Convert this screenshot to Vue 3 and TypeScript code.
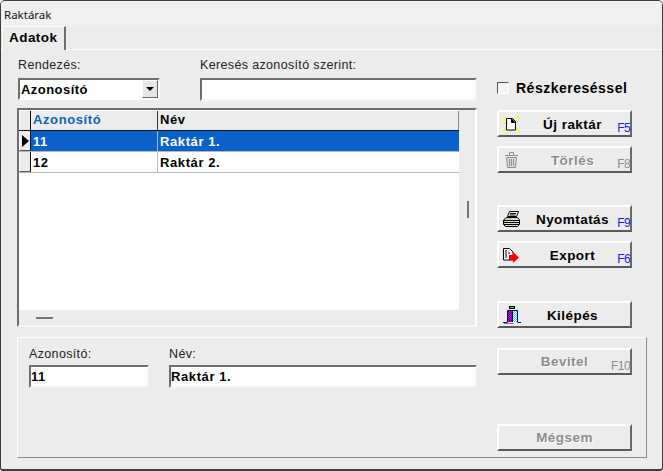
<script setup lang="ts">
interface Row { id: string; name: string; active?: boolean }
const rows: Row[] = [
  { id: '11', name: 'Raktár 1.', active: true },
  { id: '12', name: 'Raktár 2.' },
]
</script>

<template>
  <div class="win">
    <div class="title">Raktárak</div>
    <div class="tabs"><div class="tab">Adatok</div></div>
    <div class="page">
      <div class="top">
        <div class="left">
          <div class="filters">
            <div class="field combo-field">
              <label>Rendezés:</label>
              <div class="combo">
                <span>Azonosító</span>
                <span class="arrow"><i></i></span>
              </div>
            </div>
            <div class="field search-field">
              <label>Keresés azonosító szerint:</label>
              <div class="input"></div>
            </div>
          </div>
          <div class="grid">
            <div class="head">
              <div class="ind"></div>
              <div class="c1 blue">Azonosító</div>
              <div class="c2">Név</div>
            </div>
            <div v-for="r in rows" :key="r.id" class="row" :class="{ active: r.active }">
              <div class="ind"><i v-if="r.active"></i></div>
              <div class="c1">{{ r.id }}</div>
              <div class="c2">{{ r.name }}</div>
            </div>
            <div class="fill"></div>
            <div class="vthumb"></div>
            <div class="hbar"><div class="hthumb"></div></div>
          </div>
        </div>
        <div class="right">
          <div class="check"><span class="box"></span><span>Részkereséssel</span></div>
          <button class="btn b-new">
            <svg class="ico" viewBox="0 0 17 17" width="17" height="17">
              <g stroke="#ffff00" stroke-width="1.4" fill="none"><path d="M0 1l4 4M16.500 0l-4 4.500M.5 16l3-3M16 16l-3-3M0 8.500h3M8 15.500v1.500"/></g>
              <path d="M3.500 3.500h6l3 3v8.500h-9z" fill="#fff" stroke="#000"/>
              <path d="M8.500 3.500v4h4" fill="#000" stroke="#000"/>
            </svg>
            <span class="lbl">Új raktár</span><span class="key">F5</span>
          </button>
          <button class="btn off b-del">
            <svg class="ico i-del" viewBox="0 0 13 16" width="13" height="16" fill="none" stroke="#8c8c8c">
              <path d="M0 3.500h13M4.500 3v-2.500h4v2.500"/>
              <path d="M1.500 5.500h10l-1 10h-8z" fill="#dcdcdc"/>
              <path d="M4.500 7v7M6.500 7v7M8.500 7v7"/>
            </svg>
            <span class="lbl">Törlés</span><span class="key">F8</span>
          </button>
          <button class="btn b-print">
            <svg class="ico" viewBox="0 0 17 16" width="17" height="16" fill="none" stroke="#000">
              <path d="M6.500 .5h9l-2 5h-9z" fill="#fff"/>
              <path d="M7 2.500h6M6.500 4h6"/>
              <path d="M3.500 6.500h11l2 2.500v4.500l-2 2h-12l-2-2v-4.500z" fill="#d8d8d8"/>
              <path d="M1 9.500h15"/>
              <path d="M5 8h4" stroke="#d8c800"/>
              <path d="M1 11.500h15M1 13.500h15"/>
            </svg>
            <span class="lbl">Nyomtatás</span><span class="key">F9</span>
          </button>
          <button class="btn b-exp">
            <svg class="ico i-exp" viewBox="0 0 16 15" width="16" height="15">
              <path d="M.5 .5h6l3.500 3.500v8h-9.500z" fill="#fff" stroke="#000"/>
              <path d="M2 3h2M2 5h2M2 7h2M2 9h2M5 5h2" stroke="#000"/>
              <path d="M6 7h4V4l6 5.500-6 5.500v-3H6z" fill="#ff0000"/>
            </svg>
            <span class="lbl">Export</span><span class="key">F6</span>
          </button>
          <button class="btn b-exit">
            <svg class="ico" viewBox="0 0 18 18" width="18" height="18">
              <defs>
                <pattern id="mag" width="2" height="2" patternUnits="userSpaceOnUse">
                  <rect width="2" height="2" fill="#ff00c0"/>
                  <rect width="1" height="1" fill="#3000a0"/>
                  <rect x="1" y="1" width="1" height="1" fill="#3000a0"/>
                </pattern>
                <pattern id="cy" width="2" height="2" patternUnits="userSpaceOnUse">
                  <rect width="2" height="2" fill="#fff"/>
                  <rect width="1" height="1" fill="#20e0e0"/>
                  <rect x="1" y="1" width="1" height="1" fill="#20e0e0"/>
                </pattern>
              </defs>
              <rect x="6.500" y=".5" width="5" height="2" fill="#00e000" stroke="#000"/>
              <rect x="5" y="5" width="4" height="11" fill="url(#mag)"/>
              <rect x="10" y="5" width="4" height="11" fill="url(#cy)"/>
              <path d="M4.500 16v-11.500h10v11.500M9.500 5v11" fill="none" stroke="#000080"/>
              <path d="M0 16.500h4.500M14.500 16.500h3.500" stroke="#000080"/>
              <rect x="1" y="17" width="10" height="1" fill="#808080"/>
            </svg>
            <span class="lbl">Kilépés</span>
          </button>
        </div>
      </div>
      <div class="panel">
        <div class="p-left">
          <div class="field id-field">
            <label>Azonosító:</label>
            <div class="input val">11</div>
          </div>
          <div class="field name-field">
            <label>Név:</label>
            <div class="input val">Raktár 1.</div>
          </div>
        </div>
        <div class="p-right">
          <button class="btn off"><span class="lbl">Bevitel</span><span class="key">F10</span></button>
          <button class="btn off"><span class="lbl">Mégsem</span></button>
        </div>
      </div>
    </div>
  </div>
</template>

<style>
html, body { margin: 0; background: #fff; }
</style>

<style scoped>
.win {
  width: 663px;
  height: 471px;
  box-sizing: border-box;
  background: #ececec;
  border: 1px solid #3e3e3e;
  border-bottom-width: 2px;
  border-radius: 5px 5px 3px 3px;
  display: flex;
  flex-direction: column;
  overflow: hidden;
  font-family: "Liberation Sans", Arial, sans-serif;
  color: #000;
}
.title {
  height: 25px;
  flex: none;
  padding: 6px 0 0 3px;
  box-sizing: border-box;
  font-family: "Noto Sans", sans-serif;
  font-size: 11.5px;
  line-height: 16px;
  color: #111;
  background: #f0f0f0;
}
.tabs {
  height: 24px;
  flex: none;
  padding-left: 1px;
  border-bottom: 1px solid #fff;
  box-sizing: border-box;
  background: #ececec;
  display: flex;
}
.tab {
  width: 64px;
  height: 24px;
  box-sizing: border-box;
  border-top: 1px solid #fff;
  border-left: 1px solid #fff;
  border-right: 2px solid #6e6e6e;
  padding: 3px 0 0 6px;
  font-weight: 700;
  font-size: 13.5px;
  line-height: 16px;
  letter-spacing: .45px;
  background: #ececec;
}
.page { flex: 1; display: flex; flex-direction: column; padding: 7px 15px 11px 16px; min-height: 0; }
.top { display: flex; height: 280px; flex: none; }
.left { width: 460px; flex: none; }
.filters { display: flex; gap: 40px; padding-left: 1px; }
.field label {
  display: block;
  height: 21px;
  font-size: 12.5px;
  line-height: 16px;
  letter-spacing: .35px;
  color: #222;
}
.combo-field { width: 142px; }
.search-field { width: 277px; }
.combo {
  height: 22px;
  box-sizing: border-box;
  background: #fff;
  border: 2px solid;
  border-color: #6e6e6e #fff #fff #6e6e6e;
  display: flex;
  align-items: center;
  justify-content: space-between;
  padding-left: 1px;
  font-weight: 700;
  font-size: 13px;
  letter-spacing: .45px;
}
.arrow {
  width: 16px;
  height: 18px;
  box-sizing: border-box;
  background: #e6e6e6;
  border: 1px solid;
  border-color: #fff #666 #666 #fff;
  display: flex;
  align-items: center;
  justify-content: center;
}
.arrow i {
  width: 0;
  height: 0;
  border: 4px solid transparent;
  border-top: 4px solid #000;
  border-bottom: 0;
}
.input {
  height: 23px;
  box-sizing: border-box;
  background: #fff;
  border: 2px solid;
  border-color: #6e6e6e #f4f4f4 #f4f4f4 #6e6e6e;
}
.val {
  font-weight: 700;
  font-size: 13px;
  line-height: 19px;
  letter-spacing: .6px;
}
.grid {
  position: relative;
  margin-top: 7px;
  height: 219px;
  box-sizing: border-box;
  border: 2px solid;
  border-color: #6e6e6e #fff #f8f8f8 #6e6e6e;
  background: #ececec;
}
.head, .row {
  display: flex;
  width: 440px;
  box-sizing: border-box;
  font-weight: 700;
  font-size: 13px;
  letter-spacing: .6px;
}
.head { height: 21px; line-height: 18px; border-bottom: 1px solid #111; background: #ececec; border-top: 1px solid #fff; }
.row { height: 21px; line-height: 21px; background: #fff; border-bottom: 1px solid #b8b8b8; }
.row.active { background: #0b61ca; color: #fff; }
.fill { width: 440px; height: 137px; background: #fff; }
.ind {
  width: 12px;
  flex: none;
  box-sizing: border-box;
  background: #ececec;
  border-right: 1px solid #111;
  border-left: 1px solid #fff;
  border-bottom: 1px solid #555;
  display: flex;
  align-items: center;
  position: relative;
}
.head .ind { border-bottom: 0; }
.ind i {
  width: 0;
  height: 0;
  border: 6px solid transparent;
  border-left: 7px solid #000;
  border-right: 0;
  margin-left: 2px;
}
.c1 { width: 127px; flex: none; box-sizing: border-box; padding-left: 2px; border-right: 1px solid #b8b8b8; }
.head .c1 { border-right: 1px solid #333; }
.c2 { flex: 1; padding-left: 2px; }
.blue { color: #0b62b5; }
.head .c2 { border-right: 1px solid #8a8a8a; }
.vthumb {
  position: absolute;
  left: 448px;
  top: 91px;
  width: 2px;
  height: 17px;
  background: #777;
}
.hbar { position: absolute; left: 0; right: 0; bottom: 0; height: 15px; }
.hthumb { position: absolute; left: 17px; top: 7px; width: 17px; height: 2px; background: #777; }
.right { margin-left: 20px; width: 135px; flex: none; }
.check {
  height: 24px;
  margin-top: 19px;
  display: flex;
  align-items: center;
  gap: 7px;
  font-weight: 700;
  font-size: 14px;
  letter-spacing: .5px;
}
.box {
  width: 12px;
  height: 12px;
  box-sizing: border-box;
  background: #f4f4f4;
  border: 1px solid;
  border-color: #555 #fff #fff #555;
}
.btn {
  position: relative;
  display: flex;
  align-items: center;
  justify-content: center;
  width: 135px;
  height: 27px;
  padding: 0;
  box-sizing: border-box;
  background: #ececec;
  border-style: solid;
  border-color: #fff #6a6a6a #5a5a5a #fff;
  border-width: 2px;
  font-family: inherit;
  font-weight: 700;
  font-size: 13.5px;
  letter-spacing: .45px;
  color: #000;
}
.b-new { margin-top: 10px; }
.b-del { margin-top: 9px; }
.b-print { margin-top: 32px; }
.b-exp { margin-top: 9px; }
.b-exit { margin-top: 33px; }
.lbl { position: relative; left: 8px; top: 1px; }
.p-right .lbl { left: 0; top: 0; }
.ico { position: absolute; left: 4px; top: 3px; }
.i-del { left: 6px; top: 4px; }
.i-exp { top: 5px; }
.b-print .ico { top: 4px; }
.key {
  position: absolute;
  right: 0;
  bottom: 1px;
  font-weight: 400;
  font-size: 12px;
  line-height: 12px;
  letter-spacing: -.6px;
  color: #2020e8;
  text-shadow: none;
}
.off { color: #8c8c8c; text-shadow: 1px 1px 0 #fff; }
.off .key { color: #8c8c8c; }
.panel {
  height: 121px;
  flex: none;
  box-sizing: border-box;
  border: 1px solid;
  border-color: #fff #8a8a8a #8a8a8a #fff;
  display: flex;
  padding: 7px 12px 6px 11px;
}
.p-left { display: flex; gap: 20px; width: 468px; flex: none; }
.panel .field label { height: 20px; box-sizing: border-box; padding-top: 1px; }
.id-field { width: 120px; }
.name-field { width: 308px; }
.p-right { display: flex; flex-direction: column; justify-content: space-between; width: 135px; margin-top: 3px; }
</style>
